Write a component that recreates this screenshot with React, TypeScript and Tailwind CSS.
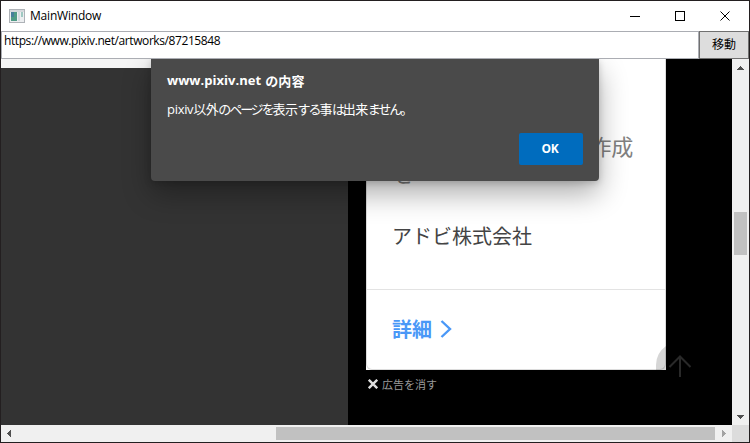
import React from "react";

const latin = "font-['Open_Sans','Noto_Sans_CJK_JP',sans-serif]";
const jp = "font-['Noto_Sans_CJK_JP',sans-serif]";

function TitleBar() {
  return (
    <header className="flex h-[30px] shrink-0 items-center bg-white">
      <svg className="ml-2 shrink-0" width="16" height="14" viewBox="0 0 16 14" shapeRendering="crispEdges">
        <rect x="0.5" y="0.5" width="15" height="13" fill="#eceef0" stroke="#aeb2b7" />
        <rect x="1" y="1" width="14" height="2" fill="#d5d8dc" />
        <rect x="2" y="3" width="6" height="9" fill="#4f9b86" />
        <rect x="2" y="3" width="3" height="5" fill="#477f9b" />
        <rect x="9" y="3" width="2" height="9" fill="#d5dbe0" />
        <rect x="12" y="3" width="2" height="5" fill="#9fc9c2" />
      </svg>
      <span className={`${latin} ml-[5px] text-[12px] leading-4 tracking-[-0.2px] text-black`}>MainWindow</span>
      <div className="ml-auto flex h-full pr-px">
        {["M0 5.5H10", "M0.5 0.5H9.5V9.5H0.5Z", "M0.5 0.5L9.5 9.5M9.5 0.5L0.5 9.5"].map((d, i) => (
          <div key={d} className={`flex items-center justify-center pb-px ${i === 2 ? "w-[46px]" : "w-[45px]"}`}>
            <svg width="10" height="10" viewBox="0 0 10 10" fill="none" stroke="#000" shapeRendering={i === 2 ? "auto" : "crispEdges"}>
              <path d={d} />
            </svg>
          </div>
        ))}
      </div>
    </header>
  );
}

function AddressRow() {
  return (
    <div className="flex h-7 shrink-0">
      <div className="flex-1 border border-[#abadb3] bg-white pl-[2px]">
        <span className={`${latin} block text-[12px] leading-[18px] tracking-[-0.41px] text-black`}>
          https://www.pixiv.net/artworks/87215848
        </span>
      </div>
      <button className={`${jp} w-[50px] border border-[#707070] bg-[#ddd] pb-[3px] text-[12px] leading-4 text-black`}>移動</button>
    </div>
  );
}

function Arrow({ d, color = "#505050" }: { d: string; color?: string }) {
  return (
    <svg width="17" height="17" viewBox="0 0 17 17" fill={color} shapeRendering="crispEdges">
      <path d={d} />
    </svg>
  );
}

function Kana({ children }: { children: string }) {
  return <span className="tracking-[-2.1px]">{children}</span>;
}

function Dialog() {
  return (
    <div className="absolute top-0 left-[150px] flex h-[122px] w-[448px] flex-col rounded-b-[4px] bg-[#4a4a4a] px-4 pt-[13px] pb-4 text-white shadow-[0_13px_29px_rgba(0,0,0,0.32),0_2px_7px_rgba(0,0,0,0.18)]">
      <div className="flex h-[18px] items-center whitespace-nowrap text-[13px] font-bold">
        <span className={`${latin} tracking-[0.04px]`}>www.pixiv.net</span>
        <span className={`${jp} ml-1 tracking-[0.1px]`}>の内容</span>
      </div>
      <p className={`${latin} mt-[10px] whitespace-nowrap text-[13px] leading-[18px] tracking-[-0.5px]`}>
        <span className="tracking-[-0.3px]">pixiv</span>以外<Kana>のページを</Kana>表示<Kana>する</Kana>事<Kana>は</Kana>出来<Kana>ません。</Kana>
      </p>
      <button className={`${latin} mt-auto h-8 w-16 self-end rounded-[2px] bg-[#006cbe] pr-[2px] text-[12px] font-bold tracking-[-0.3px]`}>OK</button>
    </div>
  );
}

function Advert() {
  return (
    <div className={`${jp} h-[311px] w-[300px] bg-white`}>
      <div className="flex h-full flex-col rounded-b-[6px] border-x border-b border-[#dcdcdc]">
        <div className="h-[230px] shrink-0 px-[25px] pt-[72px] text-[#808080]">
          <p className="-mr-[18px] pr-[25px] text-right text-[22px] leading-[28px] tracking-[-0.3px]">作成</p>
          <p className="text-[22px] leading-[26px]">を</p>
          <p className="mt-[37px] text-[20px] leading-7 text-[#444]">アドビ株式会社</p>
        </div>
        <div className="flex flex-1 items-center border-t border-[#e3e3e3] pb-[2px] pl-[25px] text-[20px] font-bold text-[#4a98f7]">
          詳細
          <svg className="ml-[8px]" width="12" height="20" viewBox="0 0 12 20" fill="none" stroke="currentColor" strokeWidth="2.4">
            <path d="M1.5 2L10 10L1.5 18" />
          </svg>
        </div>
      </div>
    </div>
  );
}

function Page() {
  return (
    <main className="relative flex min-w-0 flex-1 overflow-hidden bg-black">
      <div className="w-[347px] shrink-0 border-t-[9px] border-[#f5f5f5] bg-[#333]" />
      <div className="pl-[18px]">
        <Advert />
        <div className={`${jp} mt-[6px] flex h-4 items-center pl-[2px] text-[11px] text-[#999]`}>
          <svg width="10" height="10" viewBox="0 0 10 10" stroke="#ddd" strokeWidth="2.4">
            <path d="M0.8 0.8L9.2 9.2M9.2 0.8L0.8 9.2" />
          </svg>
          <span className="ml-1">広告を消す</span>
        </div>
      </div>
      <svg className="absolute top-[283px] left-[655px]" width="48" height="48" viewBox="0 0 48 48" fill="none">
        <path d="M10 4A24 24 0 0 0 0 24V28H10Z" fill="#000" fillOpacity="0.16" />
        <path d="M24 35V14M13.5 25L24 14.5L34.5 25" stroke="#292929" strokeWidth="2" />
      </svg>
      <Dialog />
    </main>
  );
}

export default function App() {
  return (
    <div className="flex h-[443px] w-[750px] flex-col overflow-hidden border border-[#231f20] bg-[#f0f0f0]">
      <TitleBar />
      <AddressRow />
      <div className="flex h-[366px]">
        <Page />
        <div className="flex w-[17px] flex-col bg-[#f0f0f0]">
          <Arrow d="M8 7H9V8H10V9H11V10H12V11H5V10H6V9H7V8H8Z" />
          <div className="mt-[136px] ml-[2px] h-[43px] w-[13px] bg-[#c1c1c1]" />
          <div className="mt-auto">
            <Arrow d="M5 7H12V8H11V9H10V10H9V11H8V10H7V9H6V8H5Z" />
          </div>
        </div>
      </div>
      <div className="flex h-[17px] items-center">
        <Arrow d="M6 8H7V7H8V6H9V5H10V12H9V11H8V10H7V9H6Z" />
        <div className="ml-[258px] h-[13px] w-[439px] bg-[#c1c1c1]" />
        <Arrow d="M7 5H8V6H9V7H10V8H11V9H10V10H9V11H8V12H7Z" color="#a3a3a3" />
        <div className="h-full w-[17px] bg-[#dcdcdc]" />
      </div>
    </div>
  );
}
